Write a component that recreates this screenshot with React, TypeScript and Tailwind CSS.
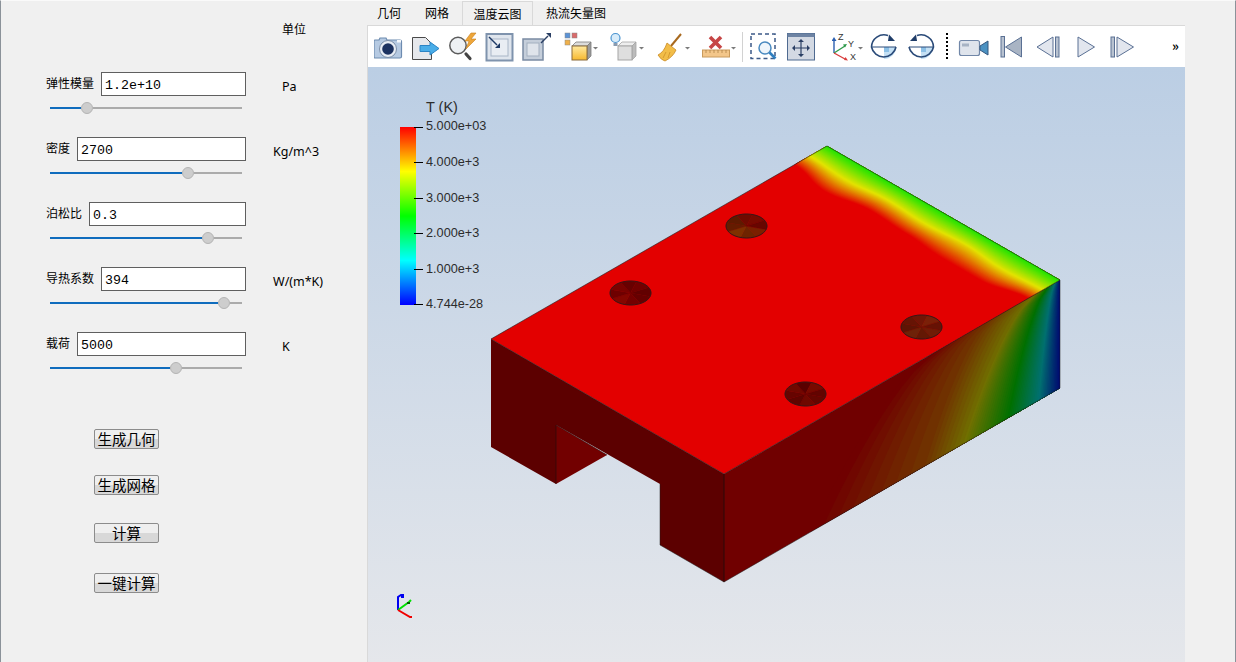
import type { ReactNode } from "react";

const params = [
  { label: "弹性模量", value: "1.2e+10", unit: "Pa", unitClass: "ml-[36px]", fill: 31 },
  { label: "密度", value: "2700", unit: "Kg/m^3", unitClass: "ml-[27px]", fill: 132 },
  { label: "泊松比", value: "0.3", unit: "", unitClass: "", fill: 152 },
  { label: "导热系数", value: "394", unit: "W/(m*K)", unitClass: "ml-[27px]", fill: 168 },
  { label: "载荷", value: "5000", unit: "K", unitClass: "ml-[36px]", fill: 120 },
];

const legendTicks = ["5.000e+03", "4.000e+3", "3.000e+3", "2.000e+3", "1.000e+3", "4.744e-28"];

// rainbow map used by the plot: 0 blue, .25 cyan, .5 green, .75 yellow, 1 red
const colorAt = (v: number, dim: number) => {
  const stops = [
    [0, 0, 255],
    [0, 255, 255],
    [0, 255, 0],
    [255, 255, 0],
    [255, 0, 0],
  ];
  const p = Math.min(Math.max(v, 0), 1) * 4;
  const i = Math.min(Math.floor(p), 3);
  const f = p - i;
  const c = stops[i].map((s, k) => Math.round((s + (stops[i + 1][k] - s) * f) * dim));
  return `rgb(${c[0]},${c[1]},${c[2]})`;
};

const lookup = (arr: number[], u: number) => {
  const p = Math.min(Math.max(u, 0), 1) * (arr.length - 1);
  const i = Math.min(Math.floor(p), arr.length - 2);
  const f = (1 - Math.cos((p - i) * Math.PI)) / 2;
  return arr[i] + (arr[i + 1] - arr[i]) * f;
};

// depth of the yellow and red lines behind the back-right edge of the top face
const yellowLine = [0.056, 0.065, 0.054, 0.06, 0.053, 0.063, 0.056];
const redLine = [0.098, 0.122, 0.103, 0.11, 0.12, 0.12, 0.096];

const topBands = () => {
  const out: { pts: string; fill: string }[] = [];
  const levels = 50;
  for (let n = levels; n >= 0; n--) {
    const v = 0.53 + (0.47 * n) / levels;
    const t = n / levels;
    const pts: string[] = [];
    for (let k = 0; k <= 60; k++) {
      const u = k / 60;
      const y = lookup(yellowLine, u);
      const r = lookup(redLine, u);
      const w = t < 0.5 ? y * (t / 0.5) : y + (r - y) * ((t - 0.5) / 0.5);
      pts.push(`${827 + u * 233 - w * 336},${146 + u * 134 + w * 193}`);
    }
    pts.push("1075,270", "830,130");
    out.push({ pts: pts.join(" "), fill: colorAt(v, 0.89) });
  }
  return out;
};

const sideBands = () => {
  const tops = [1060, 1055, 1048, 1034, 990, 930];
  const bots = [1061, 1038, 1007, 963, 925, 810];
  const lin = (arr: number[], v: number) => {
    const p = v * 4;
    const i = Math.min(Math.floor(p), 4);
    // last stretch (.875 to 1) is longer than the rest
    if (v >= 0.75) {
      const f = (v - 0.75) / 0.125;
      return f <= 1 ? arr[3] + (arr[4] - arr[3]) * f : arr[4] + (arr[5] - arr[4]) * (f - 1);
    }
    return arr[i] + (arr[i + 1] - arr[i]) * (p - i);
  };
  const out: { pts: string; fill: string }[] = [];
  const levels = 64;
  for (let n = levels; n >= 0; n--) {
    const v = n / levels;
    const top = lin(tops, v);
    const bot = lin(bots, v);
    const pts: string[] = [];
    for (let k = 0; k <= 14; k++) {
      const t = k / 14;
      const x = top + (bot - top) * Math.pow(t, 0.6);
      pts.push(`${x},${474 - ((x - 724) * 194) / 336 + t * 108}`);
    }
    pts.push("1075,400", "1075,260");
    out.push({ pts: pts.join(" "), fill: colorAt(v, 0.44) });
  }
  return out;
};

const holes = [
  { cx: 630.5, cy: 293, colors: ["#660000", "#740000", "#840600", "#6e0000", "#7a0200", "#680000", "#720000", "#620000"] },
  { cx: 746.5, cy: 226, colors: ["#7a2000", "#6e2400", "#7e3000", "#641c00", "#5e1a00", "#700a00", "#780a00", "#680600"] },
  { cx: 921.5, cy: 327, colors: ["#701c06", "#641804", "#6e2208", "#5e1404", "#661404", "#701606", "#7a2008", "#661204"] },
  { cx: 805.5, cy: 394, colors: ["#640600", "#700800", "#5e0400", "#660400", "#700800", "#5a0000", "#780a00", "#620400"] },
];

const Hole = ({ cx, cy, colors }: { cx: number; cy: number; colors: string[] }) => {
  const rx = 20.5;
  const ry = 12;
  return (
    <g>
      {colors.map((c, i) => {
        const a = (i / colors.length) * Math.PI * 2 + 0.3;
        const b = ((i + 1) / colors.length) * Math.PI * 2 + 0.3;
        return (
          <path
            key={i}
            fill={c}
            stroke={c}
            strokeWidth={0.3}
            d={`M${cx} ${cy}L${cx + rx * Math.cos(a)} ${cy + ry * Math.sin(a)}A${rx} ${ry} 0 0 1 ${cx + rx * Math.cos(b)} ${cy + ry * Math.sin(b)}Z`}
          />
        );
      })}
      <ellipse cx={cx} cy={cy} rx={rx} ry={ry} fill="none" stroke="#3a1616" strokeWidth={1} />
    </g>
  );
};

const Model = () => (
  <svg viewBox="368 67 817 595" width={817} height={595} className="block">
    <defs>
      <clipPath id="topFace">
        <polygon points="827,146 1060,280 724,474 491,339" />
      </clipPath>
      <clipPath id="sideFace">
        <polygon points="724,474 1060,280 1060,388 724,582" />
      </clipPath>
    </defs>
    <polygon points="491,339 724,474 724,582 660,545 660,484 556,425 556,484 491,447" fill="#5c0000" />
    <polygon points="556,425 607,455 556,484" fill="#720000" />
    <g clipPath="url(#sideFace)">
      <rect x="720" y="270" width="345" height="320" fill="#700000" />
      {sideBands().map((b, i) => (
        <polygon key={i} points={b.pts} fill={b.fill} />
      ))}
    </g>
    <g clipPath="url(#topFace)">
      <rect x="485" y="140" width="580" height="340" fill="#e30000" />
      {topBands().map((b, i) => (
        <polygon key={i} points={b.pts} fill={b.fill} />
      ))}
    </g>
    {holes.map((h) => (
      <Hole key={h.cx} {...h} />
    ))}
    <polyline points="491,339 827,146 1060,280 724,474 491,339" fill="none" stroke="#1c1c1c" strokeWidth={0.6} />
    <polyline points="724,474 724,582" fill="none" stroke="#2a0808" strokeWidth={1} />
    <polyline points="556,425 556,484" fill="none" stroke="#2a0808" strokeWidth={0.7} />
    <polyline points="556,425 607,455" fill="none" stroke="#2a0808" strokeWidth={0.6} />
    <polyline points="1060,280 1060,388 724,582 660,545 660,484" fill="none" stroke="#1c1c1c" strokeWidth={0.5} />
    {/* orientation marker */}
    <g fill="none" strokeWidth={2}>
      <path d="M398 610V597l3-2h2v2h-2" stroke="#0000f0" />
      <path d="M398 610l11-8 2-2" stroke="#00e000" />
      <path d="M398 610l12 7h2" stroke="#f00000" />
    </g>
    <rect x="407" y="602" width="3" height="2" fill="#006000" />
  </svg>
);

const Ico = ({ x, w, className, children }: { x: number; w: number; className: string; children: ReactNode }) => (
  <svg viewBox={`${x} 30 ${w} 32`} width={w} height={32} className={`shrink-0 ${className}`}>
    {children}
  </svg>
);

const Caret = ({ x }: { x: number }) => <path d={`M${x} 47h5l-2.5 2.5z`} fill="#7b7b7b" />;

const Toolbar = () => (
  <div className="flex h-[41px] items-start bg-white pl-[6px] pt-[4px]">
    {/* camera */}
    <Ico x={374} w={29} className="">
      <path d="M375 40h4l1-2h6l1 2h13q1.500 0 1.500 1.500v15q0 1.500-1.500 1.500h-25q-1 0-1-1.500v-15q0-1.500 1-1.500z" fill="#b6cae2" stroke="#6d8bb0" strokeWidth={1.2} />
      <circle cx={388} cy={49} r={8.5} fill="#e8edf4" stroke="#7b8ea8" />
      <circle cx={388} cy={49} r={5.8} fill="#1c3260" />
      <rect x={397} y={40} width={4} height={2.500} fill="#f4f7fb" />
    </Ico>
    {/* export */}
    <Ico x={411} w={30} className="ml-[8px]">
      <path d="M412.500 37.500h13l6 6v16h-19z" fill="#e6e8ec" stroke="#4a4a4a" />
      <path d="M420 45.500h10v-3.500l9 6.500-9 6.500v-3.500h-10z" fill="#49ade8" stroke="#2c84c4" />
    </Ico>
    {/* magnifier with spark */}
    <Ico x={447} w={31} className="ml-[6px]">
      <path d="M466 54l4 4.500" stroke="#444" strokeWidth={3.200} strokeLinecap="round" />
      <circle cx={458} cy={45.500} r={8.200} fill="#eef1f4" stroke="#5b5b5b" strokeWidth={1.500} />
      <path d="M471 33l-6 8h4l-3 8 10-10h-5l5-6z" fill="#eea63a" stroke="#c67f1e" strokeWidth={0.6} />
    </Ico>
    {/* fit inward */}
    <Ico x={485} w={29} className="ml-[7px]">
      <rect x={486.500} y={34} width={26} height={26.500} fill="#dfe5ed" stroke="#7f93ad" strokeWidth={2} />
      <rect x={491} y={39} width={17} height={17} fill="#e9edf3" stroke="#a9b6c7" />
      <path d="M489 37l8 8" stroke="#1e3a66" strokeWidth={1.400} />
      <path d="M500 48v-5l-5 5z" fill="#1e3a66" />
    </Ico>
    {/* fit outward */}
    <Ico x={522} w={30} className="ml-[8px]">
      <rect x={523} y={39} width={20} height={21} fill="#c5ceda" stroke="#7a8ba3" strokeWidth={1.500} />
      <rect x={527} y={43} width={12} height={13} fill="#dfe4eb" stroke="#a3afbf" />
      <path d="M541 43l7-7" stroke="#2a3f64" strokeWidth={1.400} />
      <path d="M551 33v5l-5-5z" fill="#2a3f64" />
    </Ico>
    {/* colored cube */}
    <Ico x={563} w={36} className="ml-[11px]">
      <defs>
        <linearGradient id="gold" x1="0" y1="0" x2="0" y2="1">
          <stop offset="0" stopColor="#ffe9a0" />
          <stop offset="1" stopColor="#f7b82e" />
        </linearGradient>
      </defs>
      <rect x={565} y={33} width={5} height={5} fill="#5c93d6" stroke="#8a8a8a" strokeWidth={0.5} />
      <rect x={572} y={33} width={5} height={5} fill="#d96b6b" stroke="#8a8a8a" strokeWidth={0.5} />
      <rect x={565} y={40} width={5} height={5} fill="#efb04a" stroke="#8a8a8a" strokeWidth={0.5} />
      <path d="M572 46l4-4h15l-4 4z" fill="#dcdcdc" stroke="#7c7c7c" strokeWidth={0.8} />
      <path d="M587 46l4-4v14l-4 4z" fill="#9a9a9a" stroke="#7c7c7c" strokeWidth={0.8} />
      <rect x={572} y={46} width={15} height={14} fill="url(#gold)" stroke="#8a6a3a" strokeWidth={1} />
      <Caret x={593} />
    </Ico>
    {/* light cube */}
    <Ico x={610} w={36} className="ml-[11px]">
      <circle cx={615.500} cy={38} r={4.500} fill="#d8ecfa" stroke="#4b94d0" strokeWidth={1.200} />
      <rect x={613.500} y={43} width={4} height={3} fill="#8a9bb0" />
      <path d="M618 46l4-4h14l-4 4z" fill="#eeeeee" stroke="#a5a5a5" strokeWidth={0.8} />
      <path d="M632 46l4-4v14l-4 4z" fill="#bcbcbc" stroke="#a5a5a5" strokeWidth={0.8} />
      <rect x={618} y={46} width={14} height={14} fill="#dedede" stroke="#a5a5a5" strokeWidth={1} />
      <Caret x={639} />
    </Ico>
    {/* broom */}
    <Ico x={657} w={36} className="ml-[11px]">
      <path d="M681 34l-10 12" stroke="#a8691f" strokeWidth={2} />
      <path d="M667 43l9 7q-3 7-11 11-4-1-7-6 6-3 9-12z" fill="#f2bd48" stroke="#c98a24" strokeWidth={0.8} />
      <path d="M666 52l-3 6M670 52l-2 6" stroke="#c98a24" strokeWidth={0.7} />
      <Caret x={685} />
    </Ico>
    {/* ruler with cross */}
    <Ico x={701} w={36} className="ml-[8px]">
      <path d="M710 37l11 11M721 37l-11 11" stroke="#c64646" strokeWidth={3.600} />
      <rect x={702.500} y={50} width={27} height={7} fill="#f3c68a" stroke="#c99a5c" />
      <path d="M706 50v3M710 50v3M714 50v3M718 50v3M722 50v3M726 50v3" stroke="#a87a3c" strokeWidth={0.7} />
      <Caret x={731} />
    </Ico>
    <div className="ml-[5px] mt-[2px] h-[30px] w-px bg-[#d2d2d2]" />
    {/* dashed zoom */}
    <Ico x={749} w={29} className="ml-[6px]">
      <rect x={751} y={34} width={24} height={24.500} fill="none" stroke="#3c5a88" strokeWidth={1.500} strokeDasharray="4 3" />
      <circle cx={765} cy={48} r={6} fill="#eef5fb" stroke="#4a8ac0" strokeWidth={1.500} />
      <path d="M769.500 52.500l6 6" stroke="#2f7fc0" strokeWidth={2.600} />
    </Ico>
    {/* pan */}
    <Ico x={786} w={30} className="ml-[8px]">
      <rect x={787.500} y={33.500} width={27} height={26.500} fill="#d3d9e3" stroke="#4f6a90" />
      <rect x={787.500} y={33.500} width={27} height={3.500} fill="#6d83a3" />
      <path d="M801 41v14M794 48h14" stroke="#2a3f64" strokeWidth={1.200} />
      <path d="M801 39l-3 3h6zM801 57l-3-3h6zM792 48l3-3v6zM810 48l-3-3v6z" fill="#2a3f64" />
    </Ico>
    {/* axes */}
    <Ico x={832} w={32} className="ml-[16px]">
      <path d="M834 53V40" stroke="#2b5fb0" strokeWidth={1.400} />
      <path d="M834 37l-2.500 4h5z" fill="#2b5fb0" />
      <path d="M834 53l11-7" stroke="#2f9a4a" strokeWidth={1.400} />
      <path d="M847 44l-4 .5 2 3z" fill="#2f9a4a" />
      <path d="M834 53l11 6" stroke="#d93c3c" strokeWidth={1.400} />
      <path d="M848 60.500l-4-.5 1.500-3z" fill="#d93c3c" />
      <text x={838} y={40} fontSize={9} fill="#333" fontFamily="Liberation Sans, sans-serif">Z</text>
      <text x={848} y={47} fontSize={9} fill="#333" fontFamily="Liberation Sans, sans-serif">Y</text>
      <text x={850} y={60} fontSize={9} fill="#333" fontFamily="Liberation Sans, sans-serif">X</text>
      <Caret x={858} />
    </Ico>
    {/* rotate cw */}
    <Ico x={870} w={28} className="ml-[6px]">
      <path d="M884 47h12a12 12 0 0 1-12 12z" fill="#c4e0f4" />
      <rect x={884} y={47} width={5} height={5} fill="#8cc0e6" />
      <path d="M872 47h24" stroke="#2a4a78" strokeWidth={1} />
      <path d="M896 47A12.500 12.500 0 0 1 871.500 47A12.500 12.500 0 0 1 888 35.500" fill="none" stroke="#2a4a78" strokeWidth={1.600} />
      <path d="M889 34.500l6 6.500h-7z" fill="#1f3c68" />
    </Ico>
    {/* rotate ccw */}
    <Ico x={907} w={28} className="ml-[9px]">
      <path d="M921 47h12a12 12 0 0 1-12 12z" fill="#c4e0f4" />
      <rect x={921} y={47} width={5} height={5} fill="#8cc0e6" />
      <path d="M909 47h24" stroke="#2a4a78" strokeWidth={1} />
      <path d="M909 47A12.500 12.500 0 0 0 933.500 47A12.500 12.500 0 0 0 917 35.500" fill="none" stroke="#2a4a78" strokeWidth={1.600} />
      <path d="M916 34.500l-6 6.500h7z" fill="#1f3c68" />
    </Ico>
    <Ico x={946} w={2} className="ml-[11px]">
      <path d="M947 33v26" stroke="#000" strokeWidth={2} strokeDasharray="2 2" />
    </Ico>
    {/* video camera */}
    <Ico x={958} w={31} className="ml-[10px]">
      <rect x={959.500} y={40.500} width={20} height={15} rx={2} fill="#dfe4ec" stroke="#7187a8" strokeWidth={1.200} />
      <rect x={962} y={43.500} width={7} height={3} fill="#a7b3c4" />
      <path d="M980 46l8-5v14l-8-5z" fill="#4c92c2" stroke="#35587f" />
    </Ico>
    {/* first */}
    <Ico x={1000} w={23} className="ml-[11px]">
      <rect x={1001} y={36.500} width={3.500} height={20.500} fill="#b8c2d0" stroke="#5a7094" />
      <path d="M1021.500 37v20l-16-10z" fill="#a9b4c4" stroke="#5a7094" />
    </Ico>
    {/* prev */}
    <Ico x={1036} w={25} className="ml-[13px]">
      <path d="M1053 37v20l-16-10z" fill="#e2e6ee" stroke="#5a7094" />
      <rect x={1055.500} y={37} width={3.500} height={20} fill="#b8c2d0" stroke="#5a7094" />
    </Ico>
    {/* play */}
    <Ico x={1077} w={19} className="ml-[16px]">
      <path d="M1078 37v20l16.500-10z" fill="#e2e6ee" stroke="#5a7094" />
    </Ico>
    {/* last */}
    <Ico x={1110} w={25} className="ml-[14px]">
      <rect x={1111} y={37} width={3.500} height={20} fill="#b8c2d0" stroke="#5a7094" />
      <path d="M1117 37v20l16.500-10z" fill="#e2e6ee" stroke="#5a7094" />
    </Ico>
    <span className="ml-[37px] mt-[8px] text-[13px] font-bold leading-[16px] text-black">»</span>
  </div>
);

const Legend = () => (
  <div className="absolute left-[32px] top-[31px] [font-family:'Liberation_Sans',sans-serif] text-[#2c2c2c]">
    <div className="ml-[26px] h-[29px] text-[14.500px] leading-[18px]">T (K)</div>
    <div className="flex">
      <div className="h-[178px] w-[16px] bg-[linear-gradient(to_top,#0000ff,#00ffff,#00ff00,#ffff00,#ff0000)]" />
      <div className="flex h-[178px] flex-col justify-between">
        {legendTicks.map((t) => (
          <div key={t} className="flex h-0 items-center">
            <div className="-ml-[2px] h-px w-[9px] bg-black" />
            <span className="ml-[3px] whitespace-nowrap text-[12.700px]">{t}</span>
          </div>
        ))}
      </div>
    </div>
  </div>
);

const ParamRow = ({ label, value, unit, unitClass, fill }: (typeof params)[number]) => (
  <div className="h-[65px]">
    <div className="flex h-[24px] items-center">
      <div className="flex w-[200px] items-center gap-[7px]">
        <span className="-mt-[2px] whitespace-nowrap text-[12px]">{label}</span>
        <input
          readOnly
          value={value}
          className="h-[24px] min-w-0 flex-1 border border-[#5f5f5f] bg-white pl-[3px] pt-[2px] [font-family:'Liberation_Mono',monospace] text-[13.300px] text-black outline-none"
        />
      </div>
      {unit && <span className={`mt-[7px] whitespace-nowrap [font-family:'Noto_Sans',sans-serif] text-[12.500px] ${unitClass}`}>{unit}</span>}
    </div>
    <div className="ml-[4px] mt-[6px] flex h-[12px] w-[192px] items-center">
      <div className="h-[2px] shrink-0 bg-[#0f6cbd]" style={{ width: fill }} />
      <div className="size-[12px] shrink-0 rounded-full border border-[#b4b4b4] bg-[#cdcdcd]" />
      <div className="h-[2px] flex-1 bg-[#ababab]" />
    </div>
  </div>
);

const ActionButton = ({ text, className }: { text: string; className: string }) => (
  <button className={`block h-[20px] w-[65px] rounded-[2px] border border-[#8c8c8c] bg-[linear-gradient(#efefef_50%,#d8d8d8_50%)] text-center text-[14.500px] leading-[18px] text-black ${className}`}>
    {text}
  </button>
);

export default function App() {
  return (
    <div className="flex h-[662px] w-[1236px] overflow-hidden border-x border-t border-x-[#8b9299] border-t-[#fafafa] bg-[#f0f0f0] [font-family:'Noto_Sans_CJK_SC',sans-serif] text-black">
      <aside className="w-[366px] shrink-0 pl-[45px]">
        <div className="h-[71px] pl-[236px] pt-[20px] text-[12px] leading-[16px]">单位</div>
        {params.map((p) => (
          <ParamRow key={p.label} {...p} />
        ))}
        <div className="pl-[48px] pt-[32px]">
          <ActionButton text="生成几何" className="" />
          <ActionButton text="生成网格" className="mt-[26px]" />
          <ActionButton text="计算" className="mt-[28px]" />
          <ActionButton text="一键计算" className="mt-[30px]" />
        </div>
      </aside>
      <main className="flex w-[818px] shrink-0 flex-col">
        <div className="flex h-[24px] text-[12px] leading-[24px]">
          <span className="ml-[10px]">几何</span>
          <span className="ml-[24px]">网格</span>
          <span className="ml-[13px] w-[71px] border-x border-t border-[#d9d9d9] text-center">温度云图</span>
          <span className="ml-[13px]">热流矢量图</span>
        </div>
        <div className="flex min-h-0 flex-1 flex-col border-l border-t border-[#d9d9d9]">
          <Toolbar />
          <div className="relative flex-1 bg-gradient-to-b from-[#bbcee4] to-[#e5e7eb]">
            <Model />
            <Legend />
          </div>
        </div>
      </main>
    </div>
  );
}
